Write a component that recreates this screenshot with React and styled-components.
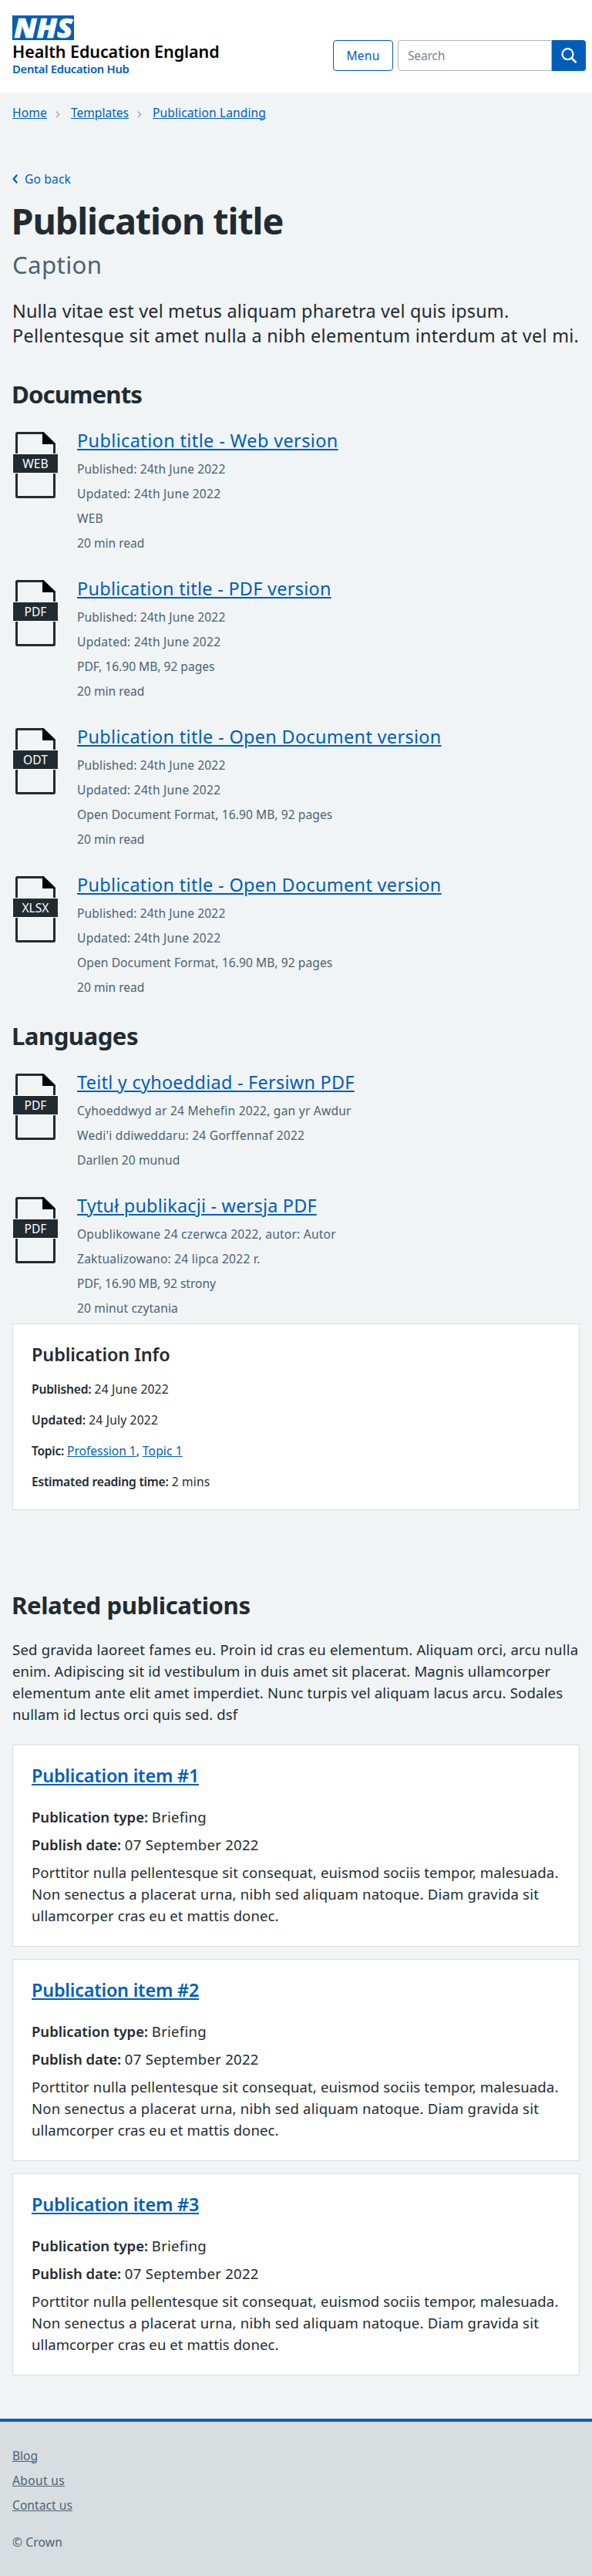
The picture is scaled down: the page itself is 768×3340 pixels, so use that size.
import React from 'react';
import styled, { createGlobalStyle } from 'styled-components';

const blue = '#005eb8';
const ink = '#212b32';
const slate = '#4c6272';
const mist = '#d8dde0';

const GlobalStyle = createGlobalStyle`
  * { box-sizing: border-box; }
  body {
    margin: 0;
    background: #f0f4f5;
    color: ${ink};
    font: 400 15.6px/24px "Noto Sans", "Open Sans", sans-serif;
  }
  h1, h2, h3, p, ul { margin: 0; padding: 0; }
  ul { list-style: none; }
`;

const Text = styled.span`
  letter-spacing: ${({ $track = 0.01 }) => $track}em;
`;

const Strong = styled(Text)`
  font-weight: 600;
`;

const Link = styled.a`
  color: ${({ $muted }) => ($muted ? slate : blue)};
  letter-spacing: ${({ $track = 0.01 }) => $track}em;
  text-decoration: underline;
  text-decoration-thickness: 1px;
  text-underline-offset: 1px;
`;

const TitleLink = styled(Link)`
  text-decoration-thickness: 2px;
  text-underline-offset: 2px;
`;

const Header = styled.header`
  display: flex;
  justify-content: space-between;
  height: 120px;
  padding: 20px 8px 0 16px;
  background: #fff;
`;

const Brand = styled.div`
  display: flex;
  flex-direction: column;
`;

const Logo = styled.svg`
  display: block;
  margin-bottom: 2px;
`;

const OrgName = styled.span`
  color: #000;
  font-size: 21.5px;
  font-weight: 600;
  line-height: 26px;
  letter-spacing: -0.08px;
`;

const SiteName = styled.span`
  color: ${blue};
  font-size: 14.8px;
  font-weight: 600;
  line-height: 18px;
  letter-spacing: -0.28px;
`;

const Tools = styled.div`
  display: flex;
  gap: 6px;
  height: 40px;
  margin-top: 32px;
`;

const MenuButton = styled.button`
  width: 78px;
  padding: 0 0 1px;
  border: 1px solid ${blue};
  border-radius: 4px;
  background: #fff;
  color: ${blue};
  font: inherit;
  letter-spacing: 0.012em;
`;

const SearchForm = styled.form`
  display: flex;
`;

const SearchInput = styled.input`
  width: 200px;
  padding: 0 12px 1px;
  border: 1px solid #aeb7bd;
  border-radius: 4px 0 0 4px;
  background: #fff;
  font: inherit;
  letter-spacing: -0.014em;
  &::placeholder { color: #768692; opacity: 1; }
`;

const SearchButton = styled.button`
  width: 44px;
  padding: 0;
  border: 0;
  border-radius: 0 4px 4px 0;
  background: ${blue};
  svg { display: block; }
`;

const Breadcrumb = styled.nav`
  display: flex;
  align-items: center;
  padding: 14px 16px 0;
  svg { margin: 4px 14px 0 11px; }
`;

const Main = styled.main`
  padding: 62px 16px 56px;
`;

const BackLink = styled.a`
  display: flex;
  align-items: center;
  gap: 9px;
  color: ${blue};
`;

const PageTitle = styled.h1`
  margin: 14px 0 0 -1.5px;
  font-size: 46.8px;
  font-weight: 700;
  line-height: 56px;
  letter-spacing: -0.024em;
`;

const Caption = styled.p`
  margin-top: 9px;
  color: ${slate};
  font-size: 31.2px;
  line-height: 40px;
  letter-spacing: 0.012em;
`;

const Lead = styled.p`
  margin-top: 24px;
  font-size: 23.4px;
  line-height: 32px;
`;

const TextLine = styled(Text)`
  display: block;
  white-space: nowrap;
`;

const SectionHeading = styled.h2`
  margin: ${({ $gap }) => $gap}px 0 0 -1px;
  font-size: 31.2px;
  font-weight: 700;
  line-height: 40px;
  letter-spacing: ${({ $track }) => $track}em;
`;

const DocumentList = styled.ul`
  display: flex;
  flex-direction: column;
  gap: 31px;
  margin-top: 24px;
`;

const DocumentRow = styled.li`
  display: flex;
  gap: 24px;
`;

const FileIcon = styled.div`
  display: grid;
  flex: none;
  place-items: center;
  width: 60px;
  height: 86px;
  margin-top: 5px;
  & > * { grid-area: 1 / 1; }
`;

const FileTag = styled.span`
  width: 60px;
  height: 26px;
  margin-bottom: 4px;
  border: 1px solid #fff;
  background: ${ink};
  color: #fff;
  line-height: 24px;
  text-align: center;
`;

const DocumentTitle = styled.h3`
  margin-bottom: 9px;
  font-size: 23.4px;
  font-weight: 400;
  line-height: 32px;
`;

const Meta = styled.p`
  color: ${slate};
  & + & { margin-top: 8px; }
`;

const Card = styled.section`
  padding: 23px 24px 24px;
  border: 1px solid ${mist};
  background: #fff;
`;

const InfoCard = styled(Card)`
  margin-top: 8px;
`;

const CardTitle = styled.h3`
  font-size: 23.4px;
  font-weight: 600;
  line-height: 32px;
  letter-spacing: -0.0035em;
`;

const InfoRow = styled.p`
  margin-top: ${({ $first }) => ($first ? 17 : 16)}px;
`;

const Body = styled.div`
  margin-top: ${({ $gap }) => $gap}px;
  font-size: 18.525px;
  line-height: 28px;
`;

const CardStack = styled.div`
  display: flex;
  flex-direction: column;
  gap: 16px;
  margin-top: 25px;
`;

const PublicationCard = styled(Card)`
  padding-bottom: 25px;
`;

const Footer = styled.footer`
  padding: 32px 16px;
  border-top: 4px solid ${blue};
  background: ${mist};
  color: ${slate};
`;

const FooterLinks = styled.ul`
  display: flex;
  flex-direction: column;
  gap: 8px;
  margin-bottom: 24px;
`;

const documents = [
  { tag: 'WEB', title: 'Publication title - Web version', track: 0.0175, meta: [
    ['Published: 24th June 2022', 0.0071], ['Updated: 24th June 2022', 0.0155], ['WEB', 0.014], ['20 min read', 0]] },
  { tag: 'PDF', title: 'Publication title - PDF version', track: 0.0128, meta: [
    ['Published: 24th June 2022', 0.0071], ['Updated: 24th June 2022', 0.0155], ['PDF, 16.90 MB, 92 pages', 0], ['20 min read', 0]] },
  { tag: 'ODT', title: 'Publication title - Open Document version', track: 0.0149, meta: [
    ['Published: 24th June 2022', 0.0071], ['Updated: 24th June 2022', 0.0155], ['Open Document Format, 16.90 MB, 92 pages', 0.0048], ['20 min read', 0]] },
  { tag: 'XLSX', title: 'Publication title - Open Document version', track: 0.0149, meta: [
    ['Published: 24th June 2022', 0.0071], ['Updated: 24th June 2022', 0.0155], ['Open Document Format, 16.90 MB, 92 pages', 0.0048], ['20 min read', 0]] },
];

const languages = [
  { tag: 'PDF', title: 'Teitl y cyhoeddiad - Fersiwn PDF', track: 0.0122, meta: [
    ['Cyhoeddwyd ar 24 Mehefin 2022, gan yr Awdur', 0.0137], ["Wedi'i ddiweddaru: 24 Gorffennaf 2022", 0.0153], ['Darllen 20 munud', 0.0055]] },
  { tag: 'PDF', title: 'Tytuł publikacji - wersja PDF', track: 0.0094, meta: [
    ['Opublikowane 24 czerwca 2022, autor: Autor', 0.0125], ['Zaktualizowano: 24 lipca 2022 r.', 0.0137], ['PDF, 16.90 MB, 92 strony', -0.0016], ['20 minut czytania', 0.0073]] },
];

const leadLines = [
  ['Nulla vitae est vel metus aliquam pharetra vel quis ipsum.', 0.008],
  ['Pellentesque sit amet nulla a nibh elementum interdum at vel mi.', 0.012],
];

const relatedLines = [
  ['Sed gravida laoreet fames eu. Proin id cras eu elementum. Aliquam orci, arcu nulla', 0.0124],
  ['enim. Adipiscing sit id vestibulum in duis amet sit placerat. Magnis ullamcorper', 0.0076],
  ['elementum ante elit amet imperdiet. Nunc turpis vel aliquam lacus arcu. Sodales', 0.0101],
  ['nullam id lectus orci quis sed. dsf', 0.008],
];

const summaryLines = [
  ['Porttitor nulla pellentesque sit consequat, euismod sociis tempor, malesuada.', 0.007],
  ['Non senectus a placerat urna, nibh sed aliquam natoque. Diam gravida sit', 0.0115],
  ['ullamcorper cras eu et mattis donec.', 0.0045],
];

const Lines = ({ lines }) =>
  lines.map(([text, track]) => <TextLine key={text} $track={track}>{text}</TextLine>);

const Separator = () => (
  <svg width="6" height="9" viewBox="0 0 6 9" fill="none" stroke="#aeb7bd" strokeWidth="1.8">
    <path d="M.8.7 4.6 4.5.8 8.300" />
  </svg>
);

const DocumentItem = ({ tag, title, track, meta }) => (
  <DocumentRow>
    <FileIcon>
      <svg width="52" height="86" viewBox="0 0 52 86">
        <path d="M35.5 1.5H2.300a.8.8 0 0 0-.8.8v81.400a.8.8 0 0 0 .8.8h47.400a.8.8 0 0 0 .8-.8V15.500" fill="none" stroke={ink} strokeWidth="3" />
        <path d="M35 0h1.500L52 15v1H35z" fill="#000" />
      </svg>
      <FileTag>{tag}</FileTag>
    </FileIcon>
    <div>
      <DocumentTitle><TitleLink $track={track}>{title}</TitleLink></DocumentTitle>
      {meta.map(([text, t]) => <Meta key={text}><Text $track={t}>{text}</Text></Meta>)}
    </div>
  </DocumentRow>
);

export default function App() {
  return (
    <>
      <GlobalStyle />
      <Header>
        <Brand>
          <Logo width="80" height="32" viewBox="0 0 80 32" role="img" aria-label="NHS">
            <rect width="80" height="32" fill={blue} />
            <text x="2.2" y="28.8" textLength="76" lengthAdjust="spacingAndGlyphs" fill="#fff" stroke="#fff" strokeWidth="0.7" fontFamily="Noto Sans" fontSize="35.5" fontStyle="italic" fontWeight="900">NHS</text>
          </Logo>
          <OrgName>Health Education England</OrgName>
          <SiteName>Dental Education Hub</SiteName>
        </Brand>
        <Tools>
          <MenuButton type="button">Menu</MenuButton>
          <SearchForm>
            <SearchInput placeholder="Search" />
            <SearchButton type="button" aria-label="Search">
              <svg width="44" height="40" viewBox="0 0 44 40" fill="none" stroke="#fff" strokeWidth="2.2">
                <circle cx="20.5" cy="18.2" r="7" />
                <path d="m25.6 23.3 5.2 5.2" strokeWidth="2.6" strokeLinecap="round" />
              </svg>
            </SearchButton>
          </SearchForm>
        </Tools>
      </Header>
      <Breadcrumb>
        <Link $track={0.0099}>Home</Link>
        <Separator />
        <Link $track={-0.0014}>Templates</Link>
        <Separator />
        <Link $track={0.0062}>Publication Landing</Link>
      </Breadcrumb>
      <Main>
        <BackLink>
          <svg width="7" height="12" viewBox="0 0 7 12" fill="none" stroke={blue} strokeWidth="2.2">
            <path d="M6.2.8 1.6 6l4.6 5.2" />
          </svg>
          <Text $track={0.009}>Go back</Text>
        </BackLink>
        <PageTitle>Publication title</PageTitle>
        <Caption>Caption</Caption>
        <Lead><Lines lines={leadLines} /></Lead>

        <SectionHeading $gap={40} $track={-0.029}>Documents</SectionHeading>
        <DocumentList>
          {documents.map((d) => <DocumentItem key={d.tag} {...d} />)}
        </DocumentList>

        <SectionHeading $gap={31} $track={-0.018}>Languages</SectionHeading>
        <DocumentList>
          {languages.map((d) => <DocumentItem key={d.title} {...d} />)}
        </DocumentList>

        <InfoCard>
          <CardTitle>Publication Info</CardTitle>
          <InfoRow $first><Strong $track={-0.0091}>Published:</Strong> <Text $track={0.012}>24 June 2022</Text></InfoRow>
          <InfoRow><Strong $track={0.003}>Updated:</Strong> <Text $track={0.012}>24 July 2022</Text></InfoRow>
          <InfoRow>
            <Strong $track={-0.0178}>Topic:</Strong>{' '}
            <Link $track={-0.0035}>Profession 1</Link>, <Link $track={0.0082}>Topic 1</Link>
          </InfoRow>
          <InfoRow><Strong $track={-0.013}>Estimated reading time:</Strong> <Text>2 mins</Text></InfoRow>
        </InfoCard>

        <SectionHeading $gap={103} $track={-0.014}>Related publications</SectionHeading>
        <Body $gap={24}><Lines lines={relatedLines} /></Body>
        <CardStack>
          {[1, 2, 3].map((n) => (
            <PublicationCard key={n}>
              <CardTitle><TitleLink $track={-0.0088}>{`Publication item #${n}`}</TitleLink></CardTitle>
              <Body $gap={24}><Strong $track={-0.0012}>Publication type:</Strong> <Text $track={0.014}>Briefing</Text></Body>
              <Body $gap={8}><Strong $track={-0.0037}>Publish date:</Strong> <Text $track={0.0152}>07 September 2022</Text></Body>
              <Body $gap={8}><Lines lines={summaryLines} /></Body>
            </PublicationCard>
          ))}
        </CardStack>
      </Main>
      <Footer>
        <FooterLinks>
          <li><Link $muted $track={-0.0029}>Blog</Link></li>
          <li><Link $muted $track={0.0202}>About us</Link></li>
          <li><Link $muted $track={0.0026}>Contact us</Link></li>
        </FooterLinks>
        <Text $track={0.0087}>© Crown</Text>
      </Footer>
    </>
  );
}
